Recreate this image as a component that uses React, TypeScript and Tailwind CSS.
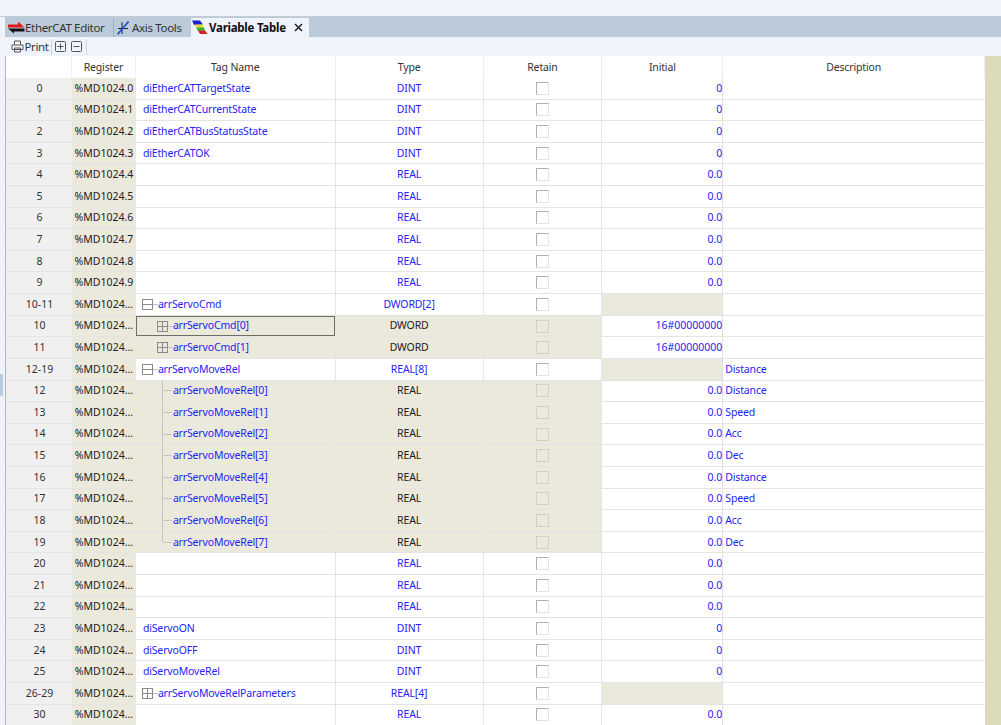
import React from "react";

type Row = {
  i: string; r: string; t?: string; ty: string; init?: string; d?: string;
  kind?: "plain" | "minus" | "plus" | "childPlus" | "child" | "childLast"; gi?: boolean; sel?: boolean;
};
const R = "%MD1024...";
const rows: Row[] = [
  { i: "0", r: "%MD1024.0", t: "diEtherCATTargetState", ty: "DINT", init: "0" },
  { i: "1", r: "%MD1024.1", t: "diEtherCATCurrentState", ty: "DINT", init: "0" },
  { i: "2", r: "%MD1024.2", t: "diEtherCATBusStatusState", ty: "DINT", init: "0" },
  { i: "3", r: "%MD1024.3", t: "diEtherCATOK", ty: "DINT", init: "0" },
  { i: "4", r: "%MD1024.4", ty: "REAL", init: "0.0" },
  { i: "5", r: "%MD1024.5", ty: "REAL", init: "0.0" },
  { i: "6", r: "%MD1024.6", ty: "REAL", init: "0.0" },
  { i: "7", r: "%MD1024.7", ty: "REAL", init: "0.0" },
  { i: "8", r: "%MD1024.8", ty: "REAL", init: "0.0" },
  { i: "9", r: "%MD1024.9", ty: "REAL", init: "0.0" },
  { i: "10-11", r: R, t: "arrServoCmd", ty: "DWORD[2]", kind: "minus", gi: true },
  { i: "10", r: R, t: "arrServoCmd[0]", ty: "DWORD", init: "16#00000000", kind: "childPlus", sel: true },
  { i: "11", r: R, t: "arrServoCmd[1]", ty: "DWORD", init: "16#00000000", kind: "childPlus" },
  { i: "12-19", r: R, t: "arrServoMoveRel", ty: "REAL[8]", kind: "minus", gi: true, d: "Distance" },
  { i: "12", r: R, t: "arrServoMoveRel[0]", ty: "REAL", init: "0.0", kind: "child", d: "Distance" },
  { i: "13", r: R, t: "arrServoMoveRel[1]", ty: "REAL", init: "0.0", kind: "child", d: "Speed" },
  { i: "14", r: R, t: "arrServoMoveRel[2]", ty: "REAL", init: "0.0", kind: "child", d: "Acc" },
  { i: "15", r: R, t: "arrServoMoveRel[3]", ty: "REAL", init: "0.0", kind: "child", d: "Dec" },
  { i: "16", r: R, t: "arrServoMoveRel[4]", ty: "REAL", init: "0.0", kind: "child", d: "Distance" },
  { i: "17", r: R, t: "arrServoMoveRel[5]", ty: "REAL", init: "0.0", kind: "child", d: "Speed" },
  { i: "18", r: R, t: "arrServoMoveRel[6]", ty: "REAL", init: "0.0", kind: "child", d: "Acc" },
  { i: "19", r: R, t: "arrServoMoveRel[7]", ty: "REAL", init: "0.0", kind: "childLast", d: "Dec" },
  { i: "20", r: R, ty: "REAL", init: "0.0" },
  { i: "21", r: R, ty: "REAL", init: "0.0" },
  { i: "22", r: R, ty: "REAL", init: "0.0" },
  { i: "23", r: R, t: "diServoON", ty: "DINT", init: "0" },
  { i: "24", r: R, t: "diServoOFF", ty: "DINT", init: "0" },
  { i: "25", r: R, t: "diServoMoveRel", ty: "DINT", init: "0" },
  { i: "26-29", r: R, t: "arrServoMoveRelParameters", ty: "REAL[4]", kind: "plus", gi: true },
  { i: "30", r: R, ty: "REAL", init: "0.0" },
];

const Box = ({ minus }: { minus?: boolean }) => (
  <svg width="11" height="11" viewBox="0 0 11 11" className="shrink-0">
    <rect x="0.5" y="0.5" width="10" height="10" fill="none" stroke="#8a8a8a" />
    <path d={minus ? "M0 5.5H11" : "M0 5.5H11M5.5 0V11"} stroke="#8a8a8a" />
  </svg>
);

const Label = ({ text }: { text?: string }) => <span className="pt-[0.6px] text-[#2424f4]">{text}</span>;

const TagCell = ({ row }: { row: Row }) => {
  const k = row.kind ?? "plain";
  const child = k === "child" || k === "childLast" || k === "childPlus";
  return (
    <div className={`relative flex h-full w-[200px] items-center overflow-hidden border-r border-[#e6e6e6] ${child ? "bg-[#ebe9dc]" : ""}`}>
      {k === "plain" && <span className="w-[7px] shrink-0" />}
      {k === "plain" && <Label text={row.t} />}
      {(k === "minus" || k === "plus") && (
        <>
          <span className="ml-[6px] flex items-center"><Box minus={k === "minus"} /><span className="h-px w-[5px] bg-[#c4c4c4]" /></span>
          <Label text={row.t} />
        </>
      )}
      {k === "childPlus" && (
        <>
          <span className="ml-[21px] flex items-center"><Box /><span className="h-px w-[5px] bg-[#c4c4c4]" /></span>
          <Label text={row.t} />
        </>
      )}
      {(k === "child" || k === "childLast") && (
        <>
          <span className={`absolute left-[26px] top-0 w-px bg-[#c4c4c4] ${k === "child" ? "h-full" : "h-1/2"}`} />
          <span className="ml-[27px] mr-[1px] h-px w-[9px] bg-[#c4c4c4]" />
          <Label text={row.t} />
        </>
      )}
      {row.sel && <span className="absolute inset-0 border border-[#6e6e66]" />}
    </div>
  );
};

const Check = ({ dim }: { dim: boolean }) => (
  <span className={`block h-[13px] w-[13px] border ${dim ? "border-[#d2d0c6]" : "border-[#e4e4e4] border-l-[#b0b0b0] border-t-[#b0b0b0] bg-white"}`} />
);

const TableRow = ({ row }: { row: Row }) => {
  const child = row.kind === "child" || row.kind === "childLast" || row.kind === "childPlus";
  const hl = child ? "bg-[#ebe9dc]" : "";
  return (
    <div className="flex h-[21.62px] border-b border-[#e4e4e4] bg-white">
      <div className="flex h-full w-[66px] items-center justify-center bg-[#f0f0f0] pl-[1px] pt-[0.6px] tracking-normal text-[#333]">{row.i}</div>
      <div className="flex h-full w-[64px] items-center justify-center whitespace-nowrap bg-[#ebe9dc] pt-[0.6px] tracking-normal text-[#222]">{row.r}</div>
      <TagCell row={row} />
      <div className={`flex h-full w-[148px] items-center justify-center border-r border-[#e6e6e6] pt-[0.6px] ${child ? "bg-[#ebe9dc] text-[#222]" : "text-[#2424f4]"}`}>{row.ty}</div>
      <div className={`flex h-full w-[119px] items-center justify-center border-r border-[#e6e6e6] ${hl}`}><Check dim={child} /></div>
      <div className={`flex h-full w-[121px] items-center justify-end border-r border-[#e0e0e0] pt-[0.6px] tracking-normal text-[#2424f4] ${row.gi ? "bg-[#ebe9dc]" : ""}`}>{row.init}</div>
      <div className="flex h-full w-[262px] items-center pl-[2px] pt-[0.6px] text-[#2424f4]">{row.d}</div>
    </div>
  );
};

const Head = ({ w, children }: { w: string; children?: React.ReactNode }) => (
  <div className={`flex h-full items-center justify-center border-r border-[#efefef] pt-[1px] text-[#333] ${w}`}>{children}</div>
);

export default function App() {
  return (
    <div className="flex h-[725px] w-[1001px] flex-col overflow-hidden bg-[#eff3fc] text-[10.5px] tracking-[-0.15px] [font-family:'Noto_Sans',sans-serif]">
      <div className="h-[17px] shrink-0 border-b border-[#c4ccd6]" />
      <div className="flex h-[20px] shrink-0 items-end">
        <div className="h-full w-[5px] shrink-0" />
        <div className="flex h-full flex-1 items-end bg-[#bccbd9] pl-[1px] text-[11.5px] tracking-[-0.33px] text-[#333]">
          <div className="flex h-[19px] w-[108px] items-center border-r border-[#9fb0c0] pl-[2px]">
            <svg width="17" height="13" viewBox="0 0 17 13" className="shrink-0">
              <path d="M0 3.5H10V.5L16.5 6.5H0z" fill="#e01818" />
              <path d="M16.5 7.5H0L6 12.5V10.5H16.5z" fill="#111" />
            </svg>
            <span>EtherCAT Editor</span>
          </div>
          <div className="flex h-[19px] w-[77px] items-center pl-[3px]">
            <svg width="12" height="14" viewBox="0 0 12 14" className="shrink-0">
              <path d="M5 1V13M1 7.5H11" stroke="#222" strokeWidth="1" fill="none" />
              <path d="M11.5 .5L.5 13.5" stroke="#1550d0" strokeWidth="1.6" fill="none" />
            </svg>
            <span className="ml-[3px]">Axis Tools</span>
          </div>
          <div className="flex h-[19px] w-[118px] items-center bg-[#eff3fc] pl-[1px] font-bold tracking-[-0.25px] text-[#111]">
            <svg width="16" height="15" viewBox="0 0 16 15" className="shrink-0">
              <path d="M0 .5H8L11 4.5L2 5z" fill="#1a22c8" />
              <path d="M2.5 4.5H10L12 7.5H5z" fill="#e8d820" />
              <path d="M4 7.5H12L13 10.5L6 11z" fill="#38b030" />
              <path d="M6 10.5H13L15.5 14H8z" fill="#d82020" />
            </svg>
            <span className="ml-[1px]">Variable Table</span>
            <svg width="9" height="9" viewBox="0 0 9 9" className="ml-[8px] shrink-0">
              <path d="M1 1l7 7M8 1L1 8" stroke="#222" strokeWidth="1.5" />
            </svg>
          </div>
        </div>
      </div>
      <div className="flex h-[19px] shrink-0 items-center pl-[11px] text-[#333]">
        <svg width="13" height="13" viewBox="0 0 13 13" fill="none" stroke="#555" strokeWidth="1" className="shrink-0">
          <path d="M3.5 4.5V1h6v3.5M1 9.5v-4.5h11v4.5zM3.5 8v4h6V8z" fill="#f5f5f5" />
        </svg>
        <span className="ml-[0.5px] w-[26.5px] text-[11.5px] tracking-[-0.4px]">Print</span>
        <span className="h-[16px] w-px bg-[#d0d4dc]" />
        <svg width="11" height="11" viewBox="0 0 11 11" className="ml-[3px] shrink-0" fill="none" stroke="#555">
          <rect x="0.5" y="0.5" width="10" height="10" rx="1" />
          <path d="M2.5 5.5h6M5.5 2.5v6" />
        </svg>
        <svg width="11" height="11" viewBox="0 0 11 11" className="ml-[5px] shrink-0" fill="none" stroke="#555">
          <rect x="0.5" y="0.5" width="10" height="10" rx="1" />
          <path d="M2.5 5.5h6" />
        </svg>
        <span className="ml-[4px] h-[16px] w-px bg-[#d0d4dc]" />
      </div>
      <div className="flex min-h-0 flex-1">
        <div className="relative w-[6px] shrink-0 border-r border-[#b4b8bc]">
          <span className="absolute left-0 top-[318px] h-[22px] w-[3px] bg-[#b8cce0]" />
        </div>
        <div className="w-[979px] shrink-0 overflow-hidden bg-white">
          <div className="flex h-[22px]">
            <Head w="w-[66px]" />
            <Head w="w-[64px]">Register</Head>
            <Head w="w-[200px]">Tag Name</Head>
            <Head w="w-[148px]">Type</Head>
            <Head w="w-[119px]">Retain</Head>
            <Head w="w-[121px]">Initial</Head>
            <Head w="w-[262px]">Description</Head>
          </div>
          {rows.map((r) => <TableRow key={r.i + r.t} row={r} />)}
        </div>
        <div className="flex-1 bg-[#dcdcbc]" />
      </div>
    </div>
  );
}
